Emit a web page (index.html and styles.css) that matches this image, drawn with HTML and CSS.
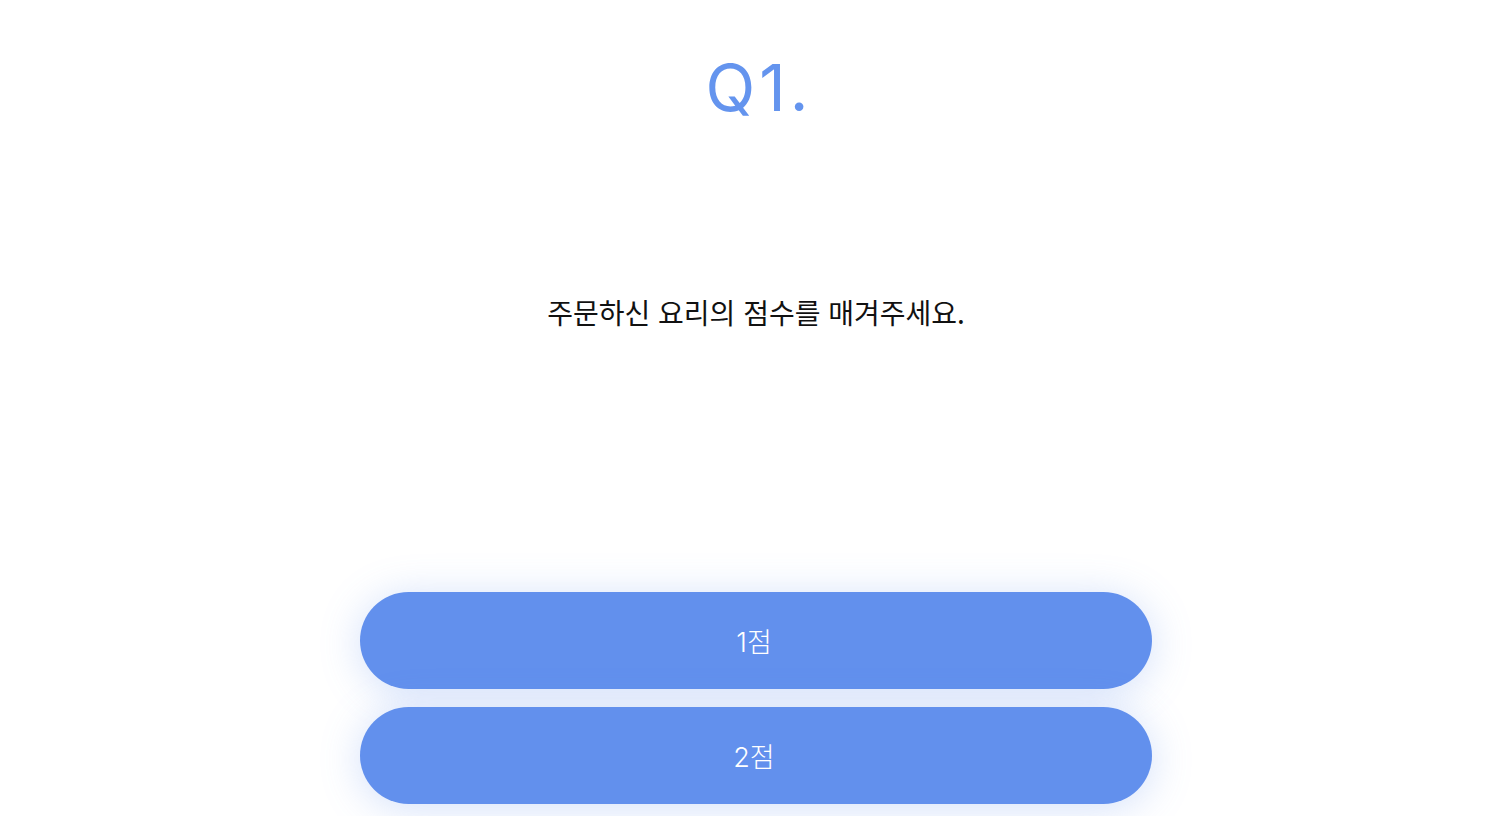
FILE: index.html
```html
<!DOCTYPE html>
<html lang="ko">
<head>
    <meta charset="UTF-8">
    <title>설문</title>
    <link rel="stylesheet" href="styles.css">
</head>
<body>
    <div id="survey">
        <h1 class="q-num">Q1.</h1>
        <p class="q-text">주문하신 요리의 점수를 매겨주세요.</p>
        <ul class="answers">
            <li><button class="answer-btn">1점</button></li>
            <li><button class="answer-btn">2점</button></li>
        </ul>
    </div>
</body>
</html>
```

FILE: styles.css
```css
* {
    margin: 0;
    padding: 0;
    box-sizing: border-box;
}
ul {
    list-style: none;
}
body {
    background: #fff;
    font-family: Inter, "Noto Sans CJK KR", sans-serif;
    padding-left: 22px;
    overflow: hidden;
}
#survey {
    width: 792px;
    margin: 0 auto;
    padding: 47px 0 12px;
    display: flex;
    flex-direction: column;
    align-items: center;
}
.q-num {
    font-size: 65px;
    font-weight: 400;
    color: #6494ee;
    line-height: 82px;
    letter-spacing: 4px;
    padding-left: 6px;
}
.q-text {
    margin-top: 163px;
    font-family: "Noto Sans CJK KR", sans-serif;
    font-size: 28px;
    font-weight: 400;
    color: #111;
    line-height: 40px;
}
.answers {
    margin-top: 260px;
    width: 100%;
    display: flex;
    flex-direction: column;
    gap: 18px;
}
.answer-btn {
    display: block;
    width: 100%;
    height: 97px;
    border: none;
    border-radius: 49px;
    background: #6290ed;
    color: #fff;
    font-family: Inter, "Noto Sans CJK KR", sans-serif;
    font-size: 27px;
    font-weight: 300;
    padding-right: 4px;
    box-shadow: 0 4px 40px rgba(98, 144, 237, 0.28);
    cursor: pointer;
}
```
